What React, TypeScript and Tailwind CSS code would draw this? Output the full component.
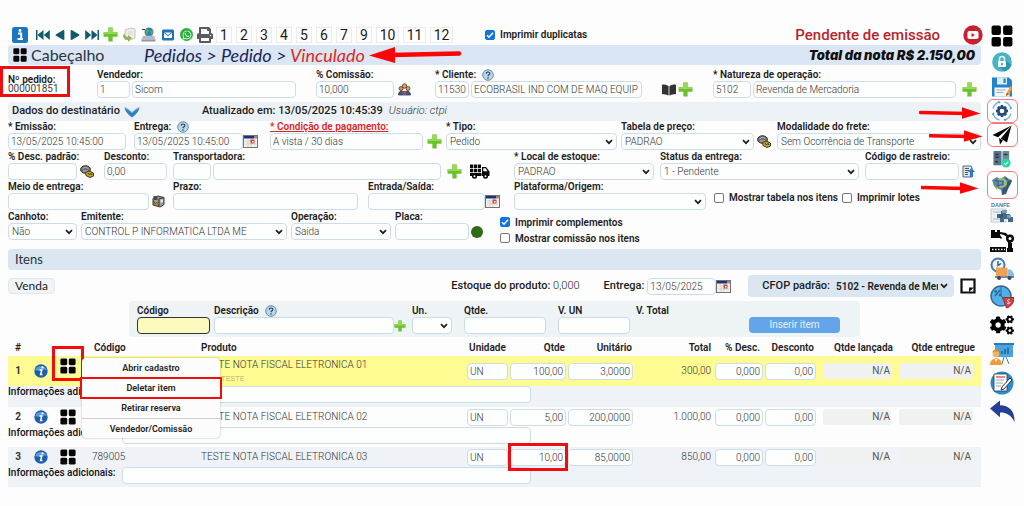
import type { ReactNode } from "react";
import {
  FaWhatsapp,
  FaPrint,
  FaCogs,
  FaBookOpen,
  FaPlay,
} from "react-icons/fa";

/* ---------- icons ---------- */

function Plus({ small = false }: { small?: boolean }) {
  return (
    <svg viewBox="0 0 14 14" className={small ? "size-3 shrink-0" : "size-[15px] shrink-0"} aria-hidden="true">
      <path d="M5 0.5h4v4.500h4.500v4H9v4.500H5V9H0.500V5H5z" fill="#6cc02c" />
      <path d="M5 0.5h4v4.500h4.500v1.500H0.500V5H5z" fill="#93d95a" />
    </svg>
  );
}

function Grid({ className = "size-5" }: { className?: string }) {
  return (
    <svg viewBox="0 0 20 20" className={`${className} shrink-0`} aria-hidden="true">
      <g fill="#050505">
        <rect x="0.500" y="0.500" width="8.500" height="8.500" rx="1.800" />
        <rect x="11" y="0.500" width="8.500" height="8.500" rx="1.800" />
        <rect x="0.500" y="11" width="8.500" height="8.500" rx="1.800" />
        <rect x="11" y="11" width="8.500" height="8.500" rx="1.800" />
      </g>
    </svg>
  );
}

function Help() {
  return (
    <svg viewBox="0 0 12 12" className="size-3 shrink-0" aria-hidden="true">
      <circle cx="6" cy="6" r="5.300" fill="#b9d6ea" stroke="#6d8ba3" />
      <path d="M4.200 4.700c0-2.300 3.600-2.200 3.600-.2C7.800 5.900 6 5.800 6 7.300" fill="none" stroke="#23466b" strokeWidth="1.200" />
      <circle cx="6" cy="9" r=".8" fill="#23466b" />
    </svg>
  );
}

function Calendar() {
  return (
    <svg viewBox="0 0 15 13" className="h-[13px] w-[15px] shrink-0" aria-hidden="true">
      <rect x=".5" y=".5" width="14" height="12" fill="#f4f1ec" stroke="#77716d" />
      <rect x="1" y="1" width="10" height="2.500" fill="#1f2f78" />
      <rect x="11" y="1" width="3" height="2.500" fill="#8d8a95" />
      <path d="M2 6h11M2 9h11M5 4v8M8 4v8" stroke="#c9c4bf" strokeWidth=".7" />
      <rect x="7.500" y="4.500" width="4" height="4" fill="#cf4a41" />
      <rect x="9" y="6" width="1.500" height="1.500" fill="#fff" />
    </svg>
  );
}

function Coins() {
  return (
    <svg viewBox="0 0 14 13" className="h-[13px] w-3.5 shrink-0" aria-hidden="true">
      <ellipse cx="5.500" cy="4.500" rx="5" ry="3.800" fill="#6c6c69" stroke="#3b3a36" />
      <path d="M2.500 4c2-2 4-2 6 0M3 6h5" stroke="#c8c8c2" fill="none" />
      <path d="M5.500 7.500 9 6l4.500 2v3L10 12.500l-4-2z" fill="#c7a72b" stroke="#3d3513" />
      <path d="m8 8 1.500 2L11 8.500l1 1.500" stroke="#3d3513" fill="none" />
    </svg>
  );
}

function Delivery() {
  return (
    <svg viewBox="0 0 13 13" className="size-[13px] shrink-0" aria-hidden="true">
      <path d="M1 3.500 6 1l6 1.500v7L8 12 1 10z" fill="#9a9a96" stroke="#35332e" />
      <path d="M7 4v7M7 4l5-1.500" stroke="#35332e" />
      <rect x="1.500" y="1" width="4" height="4" fill="#4c4a46" />
      <path d="m1.500 6 2 3L5 7l1.500 3.500L2 9.800z" fill="#d5b02f" stroke="#4d3e10" strokeWidth=".6" />
      <rect x="8.500" y="4.500" width="2.500" height="3" fill="#dfe6ef" />
    </svg>
  );
}

function People() {
  return (
    <svg viewBox="0 0 13 13" className="size-[13px] shrink-0" aria-hidden="true">
      <circle cx="6.500" cy="3" r="2.200" fill="#e2a35b" stroke="#3f2c1b" strokeWidth=".7" />
      <circle cx="3" cy="5.500" r="2" fill="#d88f50" stroke="#3f2c1b" strokeWidth=".7" />
      <circle cx="10" cy="5.500" r="2" fill="#dca06b" stroke="#3f2c1b" strokeWidth=".7" />
      <path d="M0.500 12c0-5 5-5 5.500-1 .5-4 6.500-4 6.500 1z" fill="#3c5b8f" stroke="#20293b" strokeWidth=".7" />
      <path d="M5 8h3v4H5z" fill="#c8412f" />
    </svg>
  );
}

function DeliveryTruck() {
  return (
    <svg viewBox="0 0 20 15" className="h-[15px] w-5 shrink-0" aria-hidden="true">
      <g fill="#080808">
        <path d="M0 .5h3.300v3.500H0zM4 .5h3v3.500H4zM7.700.5H11v3.500H7.700zM0 4.700h3.300v3.500H0zM4 4.700h3v3.500H4zM7.700 4.700H11v3.500H7.700zM0 9h11.500v3H0z" />
        <path d="M12 3h4l3.500 4.500V12H12z" />
        <circle cx="4.500" cy="12.300" r="2.500" />
        <circle cx="15.500" cy="12.300" r="2.500" />
      </g>
      <path d="M13.300 4.300h2.200l2 2.900h-4.200z" fill="#fff" />
      <circle cx="4.500" cy="12.300" r="1" fill="#fff" />
      <circle cx="15.500" cy="12.300" r="1" fill="#fff" />
    </svg>
  );
}

function Upload() {
  return (
    <svg viewBox="0 0 13 13" className="size-[13px] shrink-0" aria-hidden="true">
      <path d="M1 1h8l1 2v9H1z" fill="#dfe5ec" stroke="#5a6676" />
      <path d="M3 3.500h4M3 5.500h4M3 7.500h3M3 9.500h3" stroke="#49576b" />
      <path d="M9.500 3 13 7h-2v5H8V7H6z" fill="#2d79c9" />
    </svg>
  );
}

function InfoBall() {
  return (
    <svg viewBox="0 0 14 14" className="size-3.5" aria-hidden="true">
      <circle cx="7" cy="7" r="6.700" fill="#1d5fae" />
      <path d="M1.200 6C2 1.500 11 .2 12.800 6 9 4 5 8 1.200 6z" fill="#5b9bdd" />
      <path d="M5.500 6h2.300L6.600 10.500h1.900" stroke="#fff" strokeWidth="1.500" fill="none" />
      <circle cx="8.500" cy="3.400" r="1.100" fill="#fff" />
    </svg>
  );
}

function Skip({ back = false }: { back?: boolean }) {
  return (
    <svg viewBox="0 0 14 10" className={back ? "h-2.5 w-3.5" : "h-2.5 w-3.5 rotate-180"} aria-hidden="true">
      <path d="M0 0h1.500v10H0zM7.500 0v10L1.500 5zM13.800 0v10L7.800 5z" fill="#13596b" />
    </svg>
  );
}

function Chevron() {
  return (
    <svg viewBox="0 0 8 6" className="pointer-events-none absolute top-1/2 right-1 h-1.5 w-2 -translate-y-1/2" aria-hidden="true">
      <path d="m1 1.200 3 3 3-3" fill="none" stroke="#1d1d1d" strokeWidth="1.700" />
    </svg>
  );
}

function RightArrow({ className }: { className: string }) {
  return (
    <svg viewBox="0 0 62 12" preserveAspectRatio="xMaxYMid slice" className={`pointer-events-none absolute z-10 h-3 ${className}`} aria-hidden="true">
      <path d="M1.500 5.500 48 6.500" stroke="#fb0505" strokeWidth="3.500" strokeLinecap="round" />
      <path d="M43 .3 61.500 6.500 43 11.700z" fill="#fb0505" />
    </svg>
  );
}

/* ---------- form parts ---------- */

const control =
  "h-[17px] min-w-0 rounded-[4px] border border-[#cbdde9] bg-[#fdfefe] px-0.5 text-[10px] leading-[14px] font-light text-[#333] outline-none";

function Text({ id, value = "", className = "flex-1", label }: { id?: string; value?: string; className?: string; label?: string }) {
  return <input id={id} aria-label={label} defaultValue={value} className={`${control} ${className}`} />;
}

function Select({ id, value = "", className = "flex-1" }: { id: string; value?: string; className?: string }) {
  return (
    <div className={`relative flex min-w-0 ${className}`}>
      <select id={id} className={`${control} w-full appearance-none pr-3 pl-[3px]`}>
        <option>{value}</option>
      </select>
      <Chevron />
    </div>
  );
}

function Field({
  id,
  label,
  children,
  className = "",
  labelClass = "",
  extra,
}: {
  id: string;
  label: string;
  children: ReactNode;
  className?: string;
  labelClass?: string;
  extra?: ReactNode;
}) {
  return (
    <div className={`min-w-0 ${className}`}>
      <div className="flex h-3 items-center gap-1.5">
        <label htmlFor={id} className={`text-[10px] leading-3 font-semibold whitespace-nowrap ${labelClass}`}>
          {label}
        </label>
        {extra}
      </div>
      <div className="flex items-center">{children}</div>
    </div>
  );
}

function Check({ id, label, checked = false }: { id: string; label: string; checked?: boolean }) {
  return (
    <div className="flex h-4 items-center gap-[5px]">
      <span className="relative flex size-2.5">
        <input
          id={id}
          type="checkbox"
          defaultChecked={checked}
          className="peer size-2.5 appearance-none rounded-[2px] border border-[#777] bg-white checked:border-[#0f74e0] checked:bg-[#0f74e0]"
        />
        <svg viewBox="0 0 10 10" className="pointer-events-none absolute inset-0 hidden peer-checked:block" aria-hidden="true">
          <path d="m2 5.200 2 2L8 2.800" fill="none" stroke="#fff" strokeWidth="1.500" />
        </svg>
      </span>
      <label htmlFor={id} className="text-[10px] font-semibold whitespace-nowrap">
        {label}
      </label>
    </div>
  );
}

/* ---------- toolbar ---------- */

function Toolbar() {
  return (
    <div className="flex h-[21px] items-center pl-1">
      <button aria-label="Informações" className="mr-2">
        <svg viewBox="0 0 16 16" className="size-4">
          <rect width="16" height="16" rx="2.500" fill="#1976c5" />
          <path d="M6 6.500h3.200v5M5.500 12h5.500" stroke="#fff" strokeWidth="1.900" fill="none" />
          <circle cx="8" cy="3.500" r="1.400" fill="#fff" />
        </svg>
      </button>
      <div className="mr-1 flex items-center gap-[5px] text-[#13596b]">
        <button aria-label="Primeiro"><Skip back /></button>
        <button aria-label="Anterior"><FaPlay className="size-2.5 rotate-180" /></button>
        <button aria-label="Próximo"><FaPlay className="size-2.5" /></button>
        <button aria-label="Último"><Skip /></button>
      </div>
      <div className="flex items-center gap-1">
        <button aria-label="Novo"><Plus /></button>
        <button aria-label="Importar">
          <svg viewBox="0 0 15 15" className="size-[15px]">
            <path d="M3 3 9 1l4 1v9l-5 2-5-1z" fill="#eceeea" stroke="#c4c7c0" />
            <path d="M6 5h5M6 7h5" stroke="#d5d7cf" />
            <path d="M1 8c0 4 3 5 5 5v2l4-4-4-3v2C4 10 3 9 3 7z" fill="#92b552" />
          </svg>
        </button>
        <button aria-label="Enviar pela web">
          <svg viewBox="0 0 15 15" className="size-[15px]">
            <circle cx="8" cy="5" r="4.500" fill="#2b7ec1" />
            <path d="M5 3c1-2 3-1 3 .5S6 6 6 8C4 7 4 5 5 3zM9 4l3-1c1 3-1 4-2 5z" fill="#55ae56" />
            <path d="m2 9 11-.5 1.500 4H.5z" fill="#b5bcc3" />
            <path d="M.5 12.500h14v2H.5z" fill="#8e989f" />
            <path d="M1 2.500h3" stroke="#39464f" />
          </svg>
        </button>
        <button aria-label="E-mail" className="ml-0.5">
          <svg viewBox="0 0 12 12" className="size-3">
            <rect y=".5" width="12" height="11" rx="1.500" fill="#1f72b8" />
            <path d="M2 3.500h8v5.500H2z" fill="#fff" />
            <path d="m2 3.500 4 3 4-3" stroke="#1f72b8" fill="none" />
          </svg>
        </button>
        <button aria-label="WhatsApp" className="ml-0.5 flex size-[13px] items-center justify-center rounded-full bg-[#28b13c] text-white">
          <FaWhatsapp className="size-2.5" />
        </button>
        <button aria-label="Imprimir" className="text-[#5b5b5b]"><FaPrint className="size-4" /></button>
      </div>
      <nav aria-label="Páginas" className="ml-[3px] flex gap-1">
        {["1", "2", "3", "4", "5", "6", "7", "9"].map((n) => (
          <button key={n} className="h-4 w-4 border border-[#ececec] text-[14px] leading-[14px]">{n}</button>
        ))}
        {["10", "11", "12"].map((n) => (
          <button key={n} className="h-4 w-[23px] border border-[#ececec] text-[14px] leading-[14px]">{n}</button>
        ))}
      </nav>
      <div className="ml-8">
        <Check id="dup" label="Imprimir duplicatas" checked />
      </div>
      <div className="ml-auto text-[15px] leading-5 font-medium whitespace-nowrap text-[#b9242b]">Pendente de emissão</div>
      <button aria-label="Vídeo" className="-mr-0.5 ml-[23px]">
        <svg viewBox="0 0 20 20" className="size-5">
          <circle cx="10" cy="10" r="9.700" fill="#c8202c" />
          <rect x="4.500" y="6" width="11" height="8" rx="1.800" fill="#fff" />
          <path d="m8.500 8 3.500 2-3.500 2z" fill="#c8202c" />
        </svg>
      </button>
    </div>
  );
}

/* ---------- items table ---------- */

type Item = { n: number; code: string; name: string; note?: string; qty: string; unit: string; total: string };

const items: Item[] = [
  { n: 1, code: "", name: "TESTE NOTA FISCAL ELETRONICA 01", note: "TESTE", qty: "100,00", unit: "3,0000", total: "300,00" },
  { n: 2, code: "", name: "TESTE NOTA FISCAL ELETRONICA 02", qty: "5,00", unit: "200,0000", total: "1.000,00" },
  { n: 3, code: "789005", name: "TESTE NOTA FISCAL ELETRONICA 03", qty: "10,00", unit: "85,0000", total: "850,00" },
];

function RowMenu() {
  const entry = "flex h-5 items-center justify-center text-[9px] font-semibold text-[#222]";
  return (
    <div role="menu" className="absolute top-0 left-[22px] z-20 w-[138px] rounded-[4px] bg-[#fcfcfc] shadow-[0_0_2px_rgba(0,0,0,0.35)]">
      <button role="menuitem" className={`${entry} w-full`}>Abrir cadastro</button>
      <button role="menuitem" className={`${entry} relative w-full`}>
        Deletar item
        <span className="pointer-events-none absolute -inset-x-0.5 -inset-y-px border-2 border-[#f00d10]" />
      </button>
      <button role="menuitem" className={`${entry} w-full`}>Retirar reserva</button>
      <button role="menuitem" className={`${entry} w-full border-t border-[#c9ccd0]`}>Vendedor/Comissão</button>
    </div>
  );
}

function Cell({ value, label, right = true, mark = false }: { value: string; label: string; right?: boolean; mark?: boolean }) {
  return (
    <td className="relative p-0">
      <div className="flex px-px">
        <input aria-label={label} defaultValue={value} className={`${control} w-full ${right ? "text-right" : ""}`} />
      </div>
      {mark && <span className="pointer-events-none absolute -inset-x-px -inset-y-1 border-[3px] border-[#f00d10]" />}
    </td>
  );
}

function Items() {
  const head = "p-0 pb-0.5 align-bottom text-[10px] font-semibold whitespace-nowrap";
  return (
    <table className="w-full table-fixed border-collapse text-[10px] leading-3">
      <colgroup>
        <col className="w-[20px]" />
        <col className="w-[26px]" />
        <col className="w-[38px]" />
        <col className="w-[109px]" />
        <col className="w-[265px]" />
        <col className="w-[43px]" />
        <col className="w-[58px]" />
        <col className="w-[67px]" />
        <col className="w-[80px]" />
        <col className="w-[50px]" />
        <col className="w-[53px]" />
        <col className="w-[78px]" />
        <col className="w-[86px]" />
      </colgroup>
      <thead>
        <tr className="h-[19px]">
          <th className={head}>#</th>
          <th className={head} />
          <th className={head} />
          <th className={`${head} pl-0.5 text-left`}>Código</th>
          <th className={`${head} text-left`}>Produto</th>
          <th className={head}>Unidade</th>
          <th className={`${head} pr-0.5 text-right`}>Qtde</th>
          <th className={`${head} pr-0.5 text-right`}>Unitário</th>
          <th className={`${head} pr-[3px] text-right`}>Total</th>
          <th className={`${head} pr-1 text-right`}>% Desc.</th>
          <th className={`${head} pr-[3px] text-right`}>Desconto</th>
          <th className={`${head} pr-0.5 text-right`}>Qtde lançada</th>
          <th className={`${head} pr-1.5 text-right`}>Qtde entregue</th>
        </tr>
      </thead>
      {items.map((it) => {
        const first = it.n === 1;
        const shade = it.n % 2 ? "bg-[#eff3f8]" : "bg-[#fdfdfd]";
        return (
          <tbody key={it.n} className="text-[#333]">
            <tr className={first ? "h-[30px] bg-[#fdfb92]" : `h-5 ${shade}`}>
              <td className="p-0 text-center font-bold">{it.n}</td>
              <td className="p-0"><button aria-label="Detalhes" className="ml-1.5 block"><InfoBall /></button></td>
              <td className="p-0 pt-0.5 align-top">
                <div className="relative ml-1.5 flex w-4 items-center">
                  <button aria-label="Ações" className="bg-white/70"><Grid className="size-4" /></button>
                  {first && (
                    <>
                      <span className="pointer-events-none absolute -top-3 -left-2 h-[35px] w-8 border-[3px] border-[#f00d10]" />
                      <RowMenu />
                    </>
                  )}
                </div>
              </td>
              <td className="p-0 font-light">{it.code}</td>
              <td className="p-0 font-light whitespace-nowrap">
                {it.name}
                {it.note && <div className="mt-1 pl-5 text-[8px] leading-2 text-[#a9ab83]">{it.note}</div>}
              </td>
              <Cell value="UN" label="Unidade" right={false} />
              <Cell value={it.qty} label="Quantidade" mark={it.n === 3} />
              <Cell value={it.unit} label="Unitário" />
              <td className="p-0 pr-[3px] text-right font-light">{it.total}</td>
              <Cell value="0,000" label="% Desconto" />
              <Cell value="0,00" label="Desconto" />
              <td className="p-0"><div className="mr-1 ml-1.5 h-4 rounded-[3px] bg-[#f0f1f1] pr-px text-right leading-4 text-[#555]">N/A</div></td>
              <td className="p-0"><div className="mr-2 ml-1 h-4 rounded-[3px] bg-[#f0f1f1] pr-0.5 text-right leading-4 text-[#555]">N/A</div></td>
            </tr>
            <tr className={`${first ? "h-[21px]" : "h-5"} ${shade}`}>
              <td colSpan={13} className="p-0 align-top">
                <div className="flex">
                  <label htmlFor={`info${it.n}`} className="w-[114px] text-[10px] leading-[11px] font-medium text-[#111]">Informações adicionais:</label>
                  <Text id={`info${it.n}`} className="w-[42%]" />
                </div>
              </td>
            </tr>
          </tbody>
        );
      })}
    </table>
  );
}

/* ---------- side bar ---------- */

function Slot({ label, children, className = "h-7", boxed = false }: { label: string; children: ReactNode; className?: string; boxed?: boolean }) {
  return (
    <button
      aria-label={label}
      className={`flex w-[31px] items-center justify-center ${className} ${boxed ? "rounded-[6px] border border-[#f47b7e]" : ""}`}
    >
      {children}
    </button>
  );
}

function Sidebar() {
  return (
    <aside className="flex w-[43px] shrink-0 flex-col items-center pt-[23px] pr-px">
      <Slot label="Menu" className="h-[26px]"><Grid className="size-[22px]" /></Slot>
      <Slot label="Bloquear" className="h-[26px]">
        <svg viewBox="0 0 20 20" className="size-5">
          <circle cx="10" cy="10" r="9.800" fill="#45b5c4" />
          <path d="m7 14 6-6 6.500 5a10 10 0 0 1-7 6.500z" fill="#2e98aa" />
          <path d="M7.500 9V7a2.500 2.500 0 0 1 5 0v2" stroke="#e9f7fa" strokeWidth="1.500" fill="none" />
          <rect x="6" y="9" width="8" height="6" rx="1" fill="#fff" />
          <rect x="9.300" y="10.800" width="1.400" height="2.500" fill="#2e8594" />
        </svg>
      </Slot>
      <Slot label="Salvar" className="h-6">
        <svg viewBox="0 0 20 20" className="size-5">
          <path d="M0 .5h17l3 3v16H0z" fill="#2186c9" />
          <path d="M5 .5h10v7H5z" fill="#dfeaf3" />
          <rect x="11.500" y="1.500" width="2.200" height="4.500" fill="#2186c9" />
          <path d="M2.500 10.500h15v9h-15z" fill="#f4f7fa" />
          <path d="M4.500 13h9M4.500 15.500h7" stroke="#9cabb8" />
          <path d="m19 8.500-4.500 7.500-.5 3 2.800-1.500L20 12z" fill="#f3a032" />
          <path d="m14 19 1-3 1.800 1.200z" fill="#c03a2b" />
        </svg>
      </Slot>
      <Slot label="Processar" className="h-6" boxed>
        <svg viewBox="0 0 22 22" className="size-[22px]">
          <g fill="none" stroke="#72b8e2" strokeWidth="1.300">
            <path d="M2 8.500A9.300 9.300 0 0 1 8.500 2M13.500 2A9.300 9.300 0 0 1 20 8.500M20 13.500a9.300 9.300 0 0 1-6.500 6.500M8.500 20A9.300 9.300 0 0 1 2 13.500" />
          </g>
          <path d="m7 .8 2.800 1.300L8 3.800zM21.200 7l-1.300 2.800L18.200 8zM15 21.200l-2.800-1.300L14 18.200zM.8 15l1.300-2.800L3.800 14z" fill="#4b9dd0" />
          <path d="M9.800 5h2.400l.5 1.800 1.600-.8 1.700 1.700-.8 1.600 1.800.5v2.400l-1.800.5.8 1.600-1.700 1.700-1.600-.8-.5 1.800H9.800l-.5-1.800-1.600.8L6 14.300l.8-1.600L5 12.200V9.800l1.800-.5L6 7.700 7.700 6l1.600.8z" fill="#264b77" />
          <circle cx="11" cy="11" r="2.300" fill="#fff" />
        </svg>
      </Slot>
      <Slot label="Enviar" className="h-6" boxed>
        <svg viewBox="0 0 20 20" className="size-5">
          <path d="M19.500 .5 .5 10l5.500 2.300zM19.500.5 8.800 13.500l6.200 4zM7 13l1 6.500 3-4z" fill="#050505" />
        </svg>
      </Slot>
      <Slot label="Servidor" className="h-6">
        <svg viewBox="0 0 20 20" className="size-[18px]">
          <rect x=".5" y="1" width="9" height="16" rx="1" fill="#5b7286" />
          <rect x="10.500" y="1" width="7.500" height="13" rx="1" fill="#6e8699" />
          <path d="M2.500 5h4M2.500 8h4M12 5h4M2.500 13h3" stroke="#24394b" strokeWidth="1.600" />
          <circle cx="14.500" cy="14.500" r="5" fill="#2ad3a5" />
          <path d="m12.300 14.500 1.700 1.800 3-3.300" stroke="#d8fff3" strokeWidth="1.200" fill="none" />
        </svg>
      </Slot>
      <Slot label="Integrações" boxed>
        <svg viewBox="0 0 22 22" className="size-[22px]">
          <path d="m1 6 5-3 3 2 5-3 4 3 3 1-2 5-3 2-1 6-4 2-1-5-4-2-3-2-1-3z" fill="#5e86a2" />
          <path d="m12 11 7-5 2 1-4 8-2 5-4 1z" fill="#34587a" />
          <circle cx="11" cy="9" r="4.500" fill="#8fb9bd" stroke="#a2bd34" strokeWidth="1.200" />
          <path d="M7 7h5v4H9l-2 1zM4 6l3 1M14 4l3 2" stroke="#315b77" strokeWidth="1.200" fill="#6f98ad" />
          <path d="m3 12 4 1-1 3z" fill="#93b44a" />
        </svg>
      </Slot>
      <Slot label="DANFE">
        <svg viewBox="0 0 24 22" className="h-[22px] w-6">
          <text x="1" y="5" fontSize="5.500" fontWeight="700" fill="#587891" fontFamily="Liberation Sans, sans-serif">DANFE</text>
          <path d="M1 7h15v13H1z" fill="#eef1f4" stroke="#c3cbd1" />
          <path d="M3 10h9M3 17h8" stroke="#a6b2bc" />
          <path d="M7 12h4V9h5v3h4v3h3v5h-5v-3h-4v3h-4v-4H7z" fill="#456789" />
          <path d="M12 8h5v3h-5zM17 13h4v3h-4z" fill="#7b9bb6" />
          <circle cx="11" cy="14" r="2" fill="#345673" />
        </svg>
      </Slot>
      <Slot label="Produção">
        <svg viewBox="0 0 24 24" className="size-6">
          <g fill="#0a0a0a">
            <path d="M1 1h4v2h2V1h3v8H1zM0 18h16v5H0zM17 19h6v4h-6zM18 14h4v6h-4z" />
            <path d="m10 3 6 1 3 3-1 2-4-3-4-1zM10 6l2 3-1 1-2-2z" />
            <circle cx="20" cy="9.500" r="4" />
          </g>
          <path d="m19 12 1 3" stroke="#0a0a0a" strokeWidth="3" />
          <circle cx="20" cy="9.500" r="1.500" fill="#fff" />
          <path d="M2 20.500h1.500M5 20.500h1.500M8 20.500h1.500M11 20.500h1.500M14 20.500h1" stroke="#fff" strokeWidth="1.300" />
        </svg>
      </Slot>
      <Slot label="Entregas">
        <svg viewBox="0 0 24 24" className="size-6">
          <circle cx="8" cy="8" r="6.500" fill="#eaf4fb" stroke="#4b78ae" strokeWidth="2" />
          <path d="M8 4v4.500l3-2" stroke="#284e7c" strokeWidth="1.300" fill="none" />
          <rect x="6" y="10.500" width="11.500" height="8.500" fill="#efa151" />
          <path d="M17.500 12.500h3.500l3 4V20h-6.500z" fill="#8cbcdf" />
          <path d="M5 20h19" stroke="#51677b" strokeWidth="1.500" />
          <circle cx="9" cy="21" r="2" fill="#344a60" />
          <circle cx="19.500" cy="21" r="2" fill="#344a60" />
        </svg>
      </Slot>
      <Slot label="Percentuais">
        <svg viewBox="0 0 24 24" className="size-6">
          <circle cx="11" cy="11" r="10" fill="#4fb1ea" stroke="#3a668c" strokeWidth="1.500" />
          <path d="M11 11V1M11 11l8 6" stroke="#3a668c" />
          <path d="m5 11 5-6" stroke="#28628e" strokeWidth="1.300" />
          <circle cx="5.500" cy="6.500" r="1.200" fill="#28628e" />
          <circle cx="10" cy="10" r="1.200" fill="#28628e" />
          <path d="M12.500 12.500H24c0 6-3.500 9.500-7.500 10.500z" fill="#d34043" stroke="#8b3039" />
          <path d="M19.500 14.500c-3 0-2 2.500-.5 2.500 2 .5 0 2.500-2 1.500" stroke="#fff" fill="none" />
        </svg>
      </Slot>
      <Slot label="Configurações"><FaCogs className="size-6 text-black" /></Slot>
      <Slot label="Apresentação" className="h-[30px]">
        <svg viewBox="0 0 24 24" className="size-6">
          <path d="M5 2h18v13H5z" fill="#48a5df" />
          <path d="M4 1h20v2H4z" fill="#2f78b4" />
          <path d="M12 12V9M15 12V7M18 12V5.500" stroke="#23659f" strokeWidth="1.600" />
          <path d="m14 15-2 7M16 15l3 7" stroke="#547893" />
          <circle cx="6" cy="12" r="3.300" fill="#f3b35c" />
          <path d="M2.500 11c0-5 7-5 7 0-2-2-5-2-7 0z" fill="#e68a28" />
          <path d="M0 23c0-9 12-9 12 0z" fill="#f09b36" />
          <path d="m4.500 17 1.500 3 1.500-3z" fill="#fff" />
        </svg>
      </Slot>
      <Slot label="Editar nota">
        <svg viewBox="0 0 24 24" className="size-6">
          <circle cx="12" cy="12" r="11.500" fill="#2d8cc6" />
          <path d="M4 3h13v17H4z" fill="#fdfdfd" stroke="#263f56" strokeWidth=".8" />
          <path d="M6 6h9" stroke="#e05c4b" strokeWidth="1.400" />
          <path d="M6 9h8M6 12h7M6 15h5" stroke="#98a5b0" />
          <path d="m20 7 2 2-8 9-3 1 1-3z" fill="#fff" stroke="#2b3440" />
        </svg>
      </Slot>
      <Slot label="Voltar">
        <svg viewBox="0 0 25 22" className="h-[22px] w-[25px]">
          <path d="M0 8.500 10 .5v4.800C19 5.300 25 11 24.500 22 21 15 17 12.500 10 12.500v4.800z" fill="#263f96" />
        </svg>
      </Slot>
    </aside>
  );
}

/* ---------- page ---------- */

export default function App() {
  return (
    <div className="relative flex min-h-screen bg-[#fdfdfd] text-[#1c1c1c] [font-family:Roboto,'Liberation_Sans',sans-serif]">
      <main className="min-w-0 flex-1 pt-6 pl-2">
        <Toolbar />
        <header className="mb-1 flex h-5 items-center rounded-[4px] bg-[#dae6f3] pr-1.5 pl-[5px]">
          <Grid className="size-3.5" />
          <h1 className="ml-1 w-[113px] text-[16px] leading-5 text-[#2c333d] [font-family:Lato,sans-serif]">Cabeçalho</h1>
          <div className="text-[18px] leading-5 whitespace-nowrap text-[#1b2656] italic [font-family:Lato,sans-serif]">
            Pedidos &gt; Pedido &gt; <span className="text-[#e0281f]">Vinculado</span>
          </div>
          <svg viewBox="0 0 94 16" className="ml-1 h-4 w-[94px]" aria-hidden="true">
            <path d="M22 8 90 6.500" stroke="#fb0505" strokeWidth="4.500" strokeLinecap="round" />
            <path d="M0 8.500 26 0v16z" fill="#fb0505" />
          </svg>
          <div className="ml-auto text-[13px] leading-5 font-black whitespace-nowrap text-[#111] italic [font-family:Inter,sans-serif]">
            Total da nota R$ 2.150,00
          </div>
        </header>

        <div className="grid grid-cols-[89fr_219fr_119fr_278fr_268fr]">
          <div className="relative min-w-0 pt-1.5 text-[10px] leading-[9px]">
            <div className="font-semibold">Nº pedido:</div>
            <div className="text-[#444]">000001851</div>
            <span className="pointer-events-none absolute -top-[3px] -left-2 h-[31px] w-[70px] border-[3px] border-[#f00d10]" />
          </div>
          <Field id="vend" label="Vendedor:" className="pr-5">
            <Text id="vend" value="1" className="mr-0.5 w-[33px] bg-[#f7f9fa]" />
            <Text value="Sicom" label="Nome do vendedor" className="flex-1 bg-[#f7f9fa]" />
          </Field>
          <Field id="com" label="% Comissão:" className="pr-6">
            <Text id="com" value="10,000" className="mr-1 flex-1" />
            <People />
          </Field>
          <Field id="cli" label="* Cliente:" className="pr-5" extra={<Help />}>
            <Text id="cli" value="11530" className="mr-0.5 w-[34px]" />
            <Text value="ECOBRASIL IND COM DE MAQ EQUIP LTDA" label="Nome do cliente" />
            <FaBookOpen className="mr-0.5 ml-5 size-3.5 shrink-0 text-[#333]" />
            <Plus />
          </Field>
          <Field id="nat" label="* Natureza de operação:" className="pr-1">
            <Text id="nat" value="5102" className="mr-0.5 w-[38px]" />
            <Text value="Revenda de Mercadoria" label="Descrição da natureza" className="mr-1.5 flex-1" />
            <Plus />
          </Field>
        </div>

        <div className="mt-1 flex h-[19px] items-center rounded-[4px] bg-[#ecf1f5] pl-1">
          <span className="text-[11px] font-medium">Dados do destinatário</span>
          <svg viewBox="0 0 16 12" className="ml-1 h-3 w-4" aria-hidden="true">
            <path d="M.5 1.500C4 3 6 5 8 6.500c2-1.500 4-3.500 7.500-5-.5 4-4 7.500-7.500 10C4.500 9 1 5.500.5 1.500z" fill="#3583bd" />
            <path d="M1 1.500c3 1 5 3 7 5 2-2 4-4 7-5" stroke="#82c3e8" fill="none" />
          </svg>
          <span className="ml-[62px] text-[11px] font-medium">Atualizado em: 13/05/2025 10:45:39</span>
          <span className="ml-1.5 text-[11px] font-light text-[#333] italic">Usuário: ctpi</span>
        </div>

        <div className="grid grid-cols-[126fr_136fr_176fr_175fr_156fr_204fr]">
          <Field id="emi" label="* Emissão:" className="pr-2"><Text id="emi" value="13/05/2025 10:45:00" /></Field>
          <Field id="ent" label="Entrega:" className="pr-3" extra={<Help />}><Text id="ent" value="13/05/2025 10:45:00" /><Calendar /></Field>
          <Field id="cond" label="* Condição de pagamento:" labelClass="text-[#d9282d] underline" className="pr-1">
            <Text id="cond" value="A vista / 30 dias" className="mr-1 flex-1" />
            <Plus />
          </Field>
          <Field id="tipo" label="* Tipo:" className="pr-1"><Select id="tipo" value="Pedido" /></Field>
          <Field id="tab" label="Tabela de preço:" className="pr-1.5"><Select id="tab" value="PADRAO" className="mr-[3px] flex-1" /><Coins /></Field>
          <Field id="mod" label="Modalidade do frete:"><Select id="mod" value="Sem Ocorrência de Transporte" /></Field>
        </div>

        <div className="mt-px grid grid-cols-[96fr_69fr_341fr_146fr_205fr_116fr]">
          <Field id="pdesc" label="% Desc. padrão:" className="pr-2.5"><Text id="pdesc" className="mr-[3px] flex-1" /><Coins /></Field>
          <Field id="desc" label="Desconto:" className="pr-1.5"><Text id="desc" value="0,00" /></Field>
          <Field id="transp" label="Transportadora:" className="pr-6">
            <Text id="transp" className="mr-0.5 w-[38px]" />
            <Text label="Nome da transportadora" className="mr-1.5 flex-1" />
            <Plus />
            <span className="w-2" />
            <DeliveryTruck />
          </Field>
          <Field id="loc" label="* Local de estoque:" className="pr-1.5"><Select id="loc" value="PADRAO" /></Field>
          <Field id="sta" label="Status da entrega:" className="pr-1.5"><Select id="sta" value="1 - Pendente" /></Field>
          <Field id="rast" label="Código de rastreio:" className="pr-1.5"><Text id="rast" className="mr-[3px] flex-1" /><Upload /></Field>
        </div>

        <div className="mt-px grid grid-cols-[165fr_195fr_146fr_200fr_267fr]">
          <Field id="meio" label="Meio de entrega:" className="pr-2"><Text id="meio" className="mr-[3px] flex-1" /><Delivery /></Field>
          <Field id="prazo" label="Prazo:" className="pr-2.5"><Text id="prazo" /></Field>
          <Field id="es" label="Entrada/Saída:" className="pr-3.5"><Text id="es" /><Calendar /></Field>
          <Field id="plat" label="Plataforma/Origem:" className="pr-2"><Select id="plat" /></Field>
          <div className="flex items-center gap-1 pt-1">
            <Check id="mtab" label="Mostrar tabela nos itens" />
            <Check id="lotes" label="Imprimir lotes" />
          </div>
        </div>

        <div className="mt-px grid grid-cols-[73fr_210fr_104fr_104fr_482fr]">
          <Field id="can" label="Canhoto:" className="pr-1"><Select id="can" value="Não" /></Field>
          <Field id="emit" label="Emitente:" className="pr-1"><Select id="emit" value="CONTROL P INFORMATICA LTDA ME" /></Field>
          <Field id="oper" label="Operação:" className="pr-1"><Select id="oper" value="Saída" /></Field>
          <Field id="placa" label="Placa:" className="pr-4">
            <Text id="placa" className="mr-0.5 flex-1" />
            <span className="size-3 shrink-0 rounded-full bg-[#2e6b15]" />
          </Field>
          <div className="pt-[3px] pl-px">
            <Check id="comp" label="Imprimir complementos" checked />
            <Check id="mcom" label="Mostrar comissão nos itens" />
          </div>
        </div>

        <h2 className="mt-[3px] flex h-[21px] items-center rounded-[4px] bg-[#dae6f2] pl-[7px] text-[13px] text-[#2b333c] [font-family:Lato,sans-serif]">Itens</h2>

        <div className="mt-1 flex h-6 items-center">
          <button className="h-4 rounded-[4px] border border-[#dfe8ef] bg-[#eff4f7] px-1.5 text-[12px] leading-3.5 [font-family:Lato,sans-serif]">Venda</button>
          <div className="ml-auto text-[11px] whitespace-nowrap"><b className="font-medium">Estoque do produto:</b> <span className="font-light">0,000</span></div>
          <label htmlFor="ent2" className="ml-6 text-[11px] font-medium">Entrega:</label>
          <Text id="ent2" value="13/05/2025" className="ml-[3px] w-[69px]" />
          <Calendar />
          <div className="mr-1.5 ml-[17px] flex h-[22px] items-center rounded-[4px] bg-[#dae6f2] pr-0.5 pl-3.5">
            <label htmlFor="cfop" className="text-[11px] font-medium whitespace-nowrap">CFOP padrão:</label>
            <div className="relative ml-1 flex">
              <select id="cfop" className="w-[118px] appearance-none bg-transparent pr-3.5 pl-0.5 text-[10px] font-semibold">
                <option>5102 - Revenda de Mercadoria</option>
              </select>
              <Chevron />
            </div>
          </div>
          <button aria-label="Observação" className="mr-[5px]">
            <svg viewBox="0 0 16 16" className="size-4">
              <path d="M1.500 1.500h13v13h-13z" fill="#fff" stroke="#111" strokeWidth="2.200" />
              <path d="M9 14V9.500h5z" fill="#111" />
            </svg>
          </button>
        </div>

        <div className="mx-[121px] mt-[3px] grid h-9 grid-cols-[77fr_198fr_52fr_94fr_78fr_113fr_111fr] rounded-[4px] bg-[#eef3f6] pt-1 pl-2">
          <Field id="icod" label="Código" className="pr-1"><Text id="icod" className="flex-1 border-[#333]! bg-[#fdfabf]!" /></Field>
          <Field id="ides" label="Descrição" className="pr-1.5" extra={<Help />}><Text id="ides" /><Plus small /></Field>
          <Field id="iun" label="Un." className="pr-3"><Select id="iun" /></Field>
          <Field id="iqt" label="Qtde." className="pr-3"><Text id="iqt" /></Field>
          <Field id="ivu" label="V. UN" className="pr-1.5"><Text id="ivu" /></Field>
          <div className="text-[10px] leading-3 font-semibold">V. Total</div>
          <div className="pt-1.5 pr-5">
            <button className="h-4 w-full rounded-[4px] bg-[#62a6e9] text-[10px] leading-4 text-[#e3f0fc]">Inserir item</button>
          </div>
        </div>

        <Items />
      </main>
      <Sidebar />
      <RightArrow className="top-[107px] right-[43px] w-[62px]" />
      <RightArrow className="top-[130px] right-[41px] w-[54px]" />
      <RightArrow className="top-[182px] right-[45px] w-[58px]" />
    </div>
  );
}
